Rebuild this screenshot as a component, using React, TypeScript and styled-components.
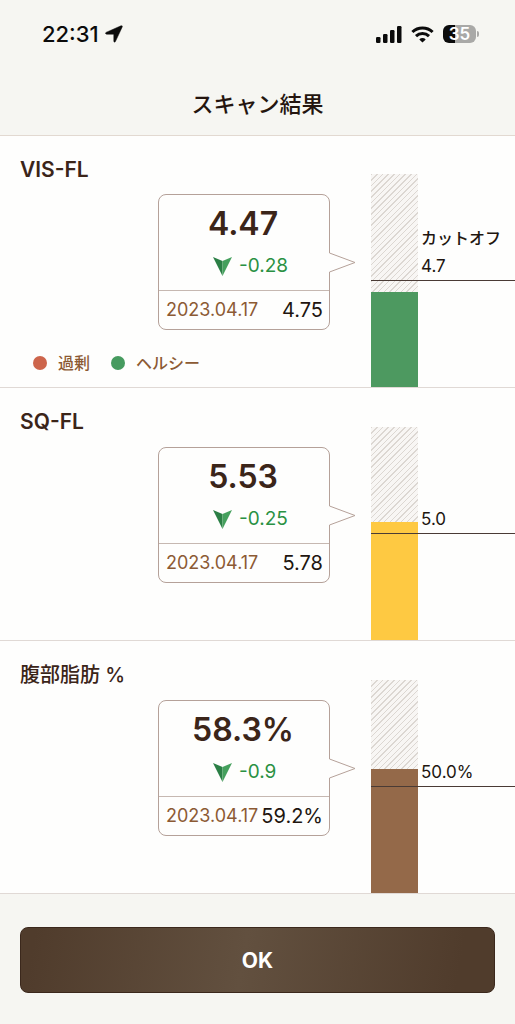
import React from 'react';
import styled, { createGlobalStyle } from 'styled-components';

const GlobalStyle = createGlobalStyle`
  *, *::before, *::after { box-sizing: border-box; }
  body {
    margin: 0;
    background: #f6f6f2;
    color: #3b2519;
    font-family: Inter, "Noto Sans CJK JP", sans-serif;
  }
`;

const Screen = styled.div`
  display: flex;
  flex-direction: column;
  min-height: 100vh;
`;

const StatusBar = styled.div`
  display: flex;
  align-items: center;
  justify-content: space-between;
  height: 68px;
  padding: 0 36px 0 42px;
  color: #0b0b0b;
`;

const StatusGroup = styled.div<{ $gap: number }>`
  display: flex;
  align-items: center;
  gap: ${({ $gap }) => $gap}px;
`;

const Clock = styled.span`
  font-size: 22px;
  line-height: 28px;
  font-weight: 500;
`;

const Battery = styled.div`
  display: flex;
  align-items: center;
  gap: 1px;

  &::after {
    content: "";
    width: 2px;
    height: 6px;
    border-radius: 0 2px 2px 0;
    background: #a9a9a7;
  }
`;

const BatteryBody = styled.div`
  width: 33px;
  height: 18px;
  border-radius: 6px;
  background: linear-gradient(90deg, #0b0b0b 35%, #a9a9a7 35%);
  color: #ffffff;
  font-size: 17px;
  line-height: 18px;
  font-weight: 600;
  text-align: center;
`;

const Header = styled.header`
  height: 67px;
  padding-top: 20px;
  text-align: center;
`;

const PageTitle = styled.h1`
  margin: 0;
  font-size: 22px;
  line-height: 32px;
  font-weight: 500;
  color: #24150f;
`;

const Results = styled.main`
  border-top: 1px solid #e2d9d1;
  background: #fefefd;
`;

const Metric = styled.section`
  display: grid;
  grid-template-columns: minmax(0, 1fr) 172px 41px 144px;
  grid-template-rows: 194px 1fr;
  height: 252px;
  padding-left: 20px;
  border-bottom: 1px solid #e0d9d5;

  & + & {
    grid-template-rows: 195px 1fr;
    height: 253px;
  }
`;

const MetricTitle = styled.h2<{ $japanese?: boolean }>`
  grid-area: 1 / 1;
  margin: 0;
  padding-top: 20px;
  font-size: ${({ $japanese }) => ($japanese ? 20 : 21)}px;
  line-height: 28px;
  font-weight: ${({ $japanese }) => ($japanese ? 500 : 600)};
  white-space: nowrap;
`;

const Callout = styled.div`
  grid-area: 1 / 2;
  align-self: end;
  position: relative;
  display: flex;
  flex-direction: column;
  height: 136px;
  border: 1px solid #b5a199;
  border-radius: 8px;
`;

const Pointer = styled.svg`
  position: absolute;
  top: 57px;
  left: 100%;
`;

const Current = styled.div`
  flex: 1;
  display: flex;
  flex-direction: column;
  align-items: center;
  padding-top: 9px;
  border-bottom: 1px solid #c6b8b1;
`;

const Value = styled.strong`
  padding-right: 2px;
  font-size: 32px;
  line-height: 40px;
  font-weight: 600;
`;

const Delta = styled.span`
  display: flex;
  align-items: center;
  gap: 7px;
  width: 76px;
  margin-top: 8px;
  margin-left: 14px;
  font-size: 19px;
  line-height: 28px;
  color: #2a9143;
  white-space: nowrap;

  svg { flex: none; }
`;

const Previous = styled.div`
  display: flex;
  align-items: center;
  justify-content: space-between;
  height: 38px;
  padding: 0 6px 0 7px;
  font-size: 20px;
  line-height: 24px;
  color: #21150f;
`;

const PreviousDate = styled.time`
  font-size: 18px;
  color: #8c5a34;
`;

const Legend = styled.ul`
  grid-area: 2 / 1 / 3 / 3;
  display: flex;
  align-items: flex-start;
  gap: 21px;
  margin: 0;
  padding: 21px 0 0 13px;
  list-style: none;
`;

const LegendItem = styled.li<{ $color: string }>`
  display: flex;
  align-items: center;
  gap: 11px;
  font-size: 16px;
  line-height: 24px;
  font-weight: 500;
  color: #8c5a34;

  &::before {
    content: "";
    width: 14px;
    height: 14px;
    border-radius: 50%;
    background: ${({ $color }) => $color};
  }
`;

const Chart = styled.div`
  grid-area: 1 / 4 / 3 / 5;
  align-self: end;
  position: relative;
  display: flex;
  gap: 3px;
  height: 213px;
`;

const Track = styled.div`
  display: flex;
  flex-direction: column;
  justify-content: flex-end;
  width: 47px;
  background: #f8f6f4 repeating-linear-gradient(135deg, #dcd7d2 0 1px, transparent 1px 4px);
`;

const Fill = styled.div<{ $color: string }>`
  background: ${({ $color }) => $color};
`;

const Cutoff = styled.div`
  display: flex;
  flex-direction: column;
  justify-content: flex-end;
  height: 106px;
  font-size: 17px;
  line-height: 28px;
  color: #21150f;
`;

const CutoffName = styled.span`
  font-size: 16px;
  font-weight: 500;
`;

const CutoffLine = styled.div`
  position: absolute;
  top: 106px;
  left: 0;
  right: 0;
  height: 1px;
  background: #4a3b35;
`;

const Footer = styled.footer`
  flex: 1;
  padding: 33px 20px 31px;
`;

const OkButton = styled.button`
  width: 100%;
  height: 66px;
  padding: 2px 0 0;
  border: 1px solid #3b281c;
  border-radius: 8px;
  background: linear-gradient(100deg, #503c2c 3%, #62503f 47%, #503c2c 92%);
  color: #ffffff;
  font-family: inherit;
  font-size: 21px;
  line-height: 28px;
  font-weight: 700;
`;

type MetricData = {
  title: string;
  japanese?: boolean;
  value: string;
  delta: string;
  previous: string;
  cutoff: string;
  fill: number;
  color: string;
  first?: boolean;
};

const metrics: MetricData[] = [
  { title: 'VIS-FL', value: '4.47', delta: '-0.28', previous: '4.75', cutoff: '4.7', fill: 44.7, color: '#4d9960', first: true },
  { title: 'SQ-FL', value: '5.53', delta: '-0.25', previous: '5.78', cutoff: '5.0', fill: 55.3, color: '#fec942' },
  { title: '腹部脂肪 %', japanese: true, value: '58.3%', delta: '-0.9', previous: '59.2%', cutoff: '50.0%', fill: 58.3, color: '#946949' },
];

const DownArrow = () => (
  <svg width="19" height="19" viewBox="0 0 19 19" aria-hidden="true">
    <path d="M0 0 L9.5 4 V19 Z" fill="#2b7f45" />
    <path d="M19 0 L9.5 4 V19 Z" fill="#45a05d" />
  </svg>
);

const MetricRow = ({ data }: { data: MetricData }) => (
  <Metric>
    <MetricTitle $japanese={data.japanese}>{data.title}</MetricTitle>
    <Callout>
      <Current>
        <Value>{data.value}</Value>
        <Delta>
          <DownArrow />
          {data.delta}
        </Delta>
      </Current>
      <Previous>
        <PreviousDate dateTime="2023-04-17">2023.04.17</PreviousDate>
        <span>{data.previous}</span>
      </Previous>
      <Pointer width="27" height="22" viewBox="0 0 27 22" aria-hidden="true">
        <path d="M0 1 H1 L26 10.5 L1 20 H0 Z" fill="#fefefd" />
        <path d="M.5 1 L26 10.5 L.5 20" fill="none" stroke="#b5a199" />
      </Pointer>
    </Callout>
    {data.first && (
      <Legend>
        <LegendItem $color="#cd654b">過剰</LegendItem>
        <LegendItem $color="#469b5f">ヘルシー</LegendItem>
      </Legend>
    )}
    <Chart>
      <Track>
        <Fill $color={data.color} style={{ height: `${data.fill}%` }} />
      </Track>
      <Cutoff>
        {data.first && <CutoffName>カットオフ</CutoffName>}
        <span>{data.cutoff}</span>
      </Cutoff>
      <CutoffLine />
    </Chart>
  </Metric>
);

export default function App() {
  return (
    <Screen>
      <GlobalStyle />
      <StatusBar>
        <StatusGroup $gap={6}>
          <Clock>22:31</Clock>
          <svg width="18" height="18" viewBox="0 0 18 18" aria-hidden="true">
            <path d="M1 7.4 L16 .8 Q17.8 .4 17.2 2 L10.4 16.6 Q9.3 18 8.8 16.2 V9.8 Q8.8 9.2 8.2 9.2 H1.6 Q-.4 8.6 1 7.4 Z" fill="currentColor" stroke="currentColor" strokeWidth=".5" />
          </svg>
        </StatusGroup>
        <StatusGroup $gap={9}>
          <svg width="26" height="17" viewBox="0 0 26 17" fill="currentColor" aria-hidden="true">
            <rect x="0" y="11" width="4.5" height="6" rx="1.2" />
            <rect x="7" y="8" width="4.5" height="9" rx="1.2" />
            <rect x="14" y="4" width="4.5" height="13" rx="1.2" />
            <rect x="21" y="0" width="4.5" height="17" rx="1.2" />
          </svg>
          <svg width="23" height="17" viewBox="0 0 23 17" fill="none" stroke="currentColor" strokeWidth="3" aria-hidden="true">
            <path d="M1.4 6 A14.6 14.6 0 0 1 21.6 6" />
            <path d="M5 10.2 A9.4 9.4 0 0 1 18 10.2" />
            <path d="M11.5 16.6 L8.3 13.4 A4.6 4.6 0 0 1 14.7 13.4 Z" fill="currentColor" stroke="none" />
          </svg>
          <Battery>
            <BatteryBody>35</BatteryBody>
          </Battery>
        </StatusGroup>
      </StatusBar>
      <Header>
        <PageTitle>スキャン結果</PageTitle>
      </Header>
      <Results>
        {metrics.map((m) => (
          <MetricRow key={m.title} data={m} />
        ))}
      </Results>
      <Footer>
        <OkButton type="button">OK</OkButton>
      </Footer>
    </Screen>
  );
}
